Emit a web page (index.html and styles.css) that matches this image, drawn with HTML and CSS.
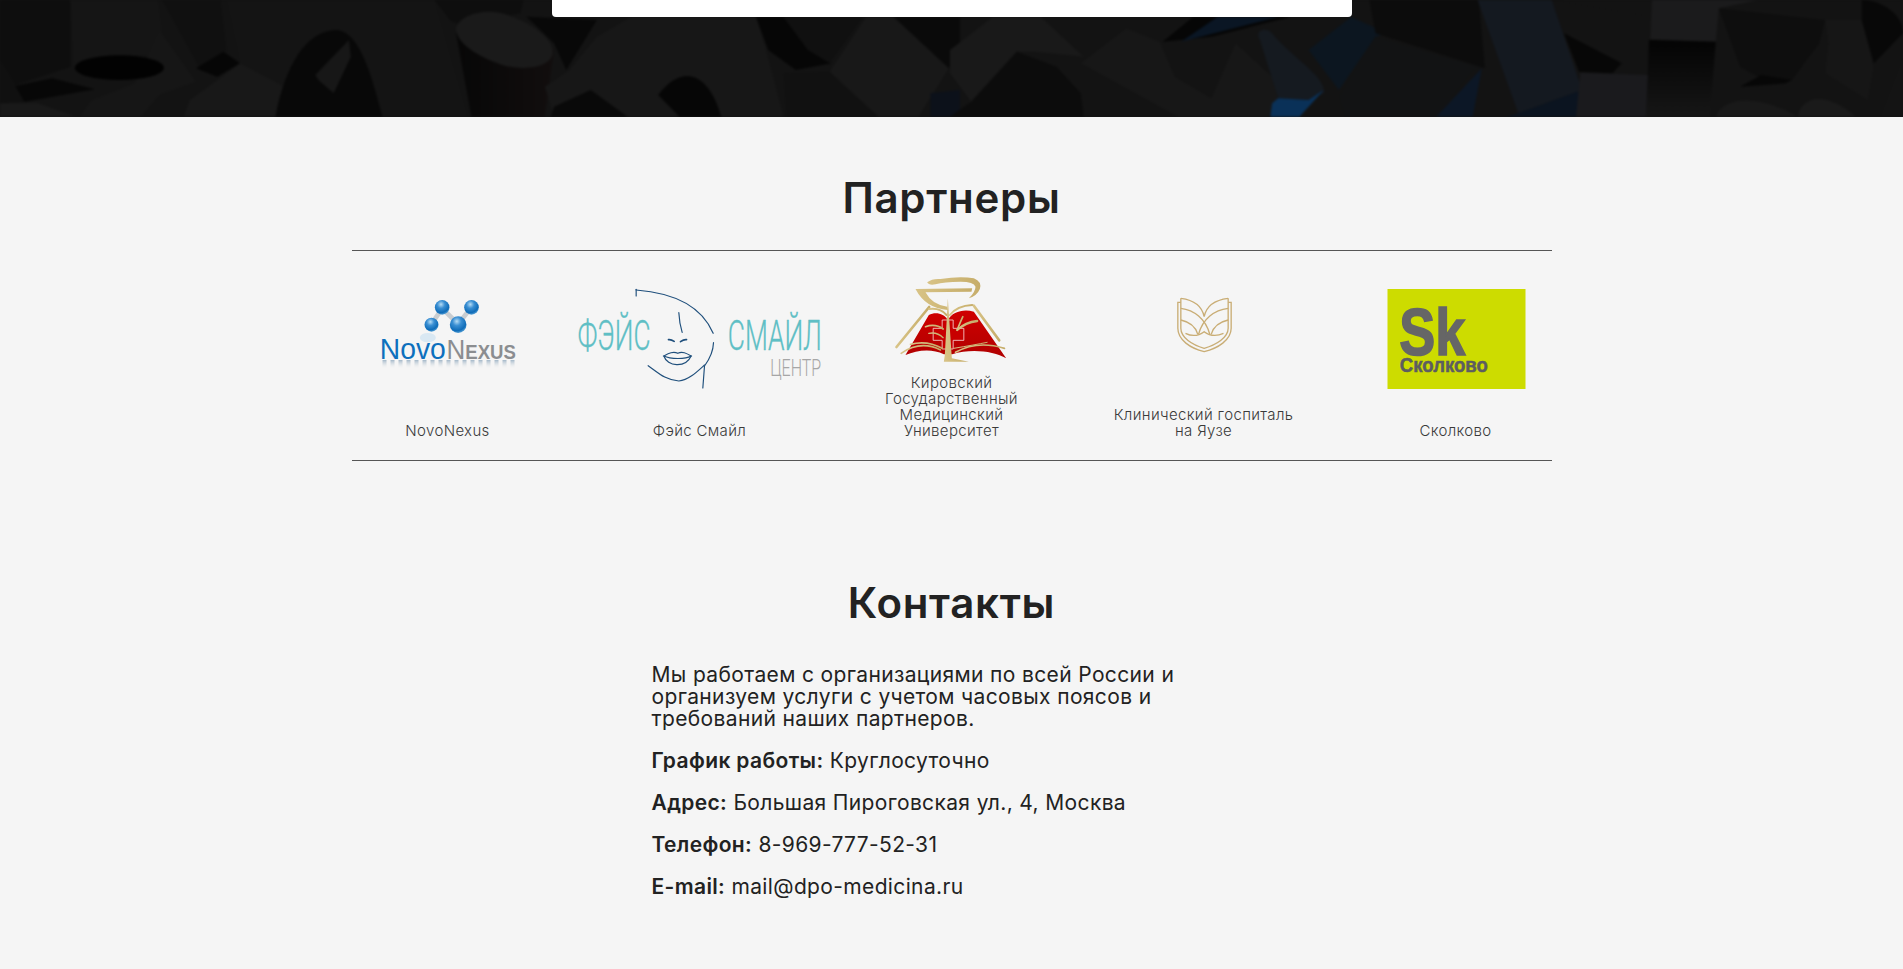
FILE: index.html
```html
<!DOCTYPE html>
<html lang="ru">
<head>
<meta charset="utf-8">
<title>Партнеры и контакты</title>
<link rel="stylesheet" href="styles.css">
</head>
<body>
<header class="hero">
  <svg class="hero-art" viewBox="0 0 1903 117" preserveAspectRatio="none" aria-hidden="true">
    <defs>
      <linearGradient id="fade" x1="0" y1="0" x2="0" y2="1"><stop offset="0" stop-color="#040404"/><stop offset="1" stop-color="#161616"/></linearGradient>
      <linearGradient id="col" x1="0" y1="0" x2="1" y2="0"><stop offset="0" stop-color="#070707"/><stop offset="1" stop-color="#120e0e"/></linearGradient>
    </defs>
    <rect width="1903" height="117" fill="#131313"/>
    <g transform="scale(.6122 .3333)">
      <polygon points="0,0 115,0 115,200 25,255 0,180" fill="#0e0e0e"/>
      <polygon points="115,0 258,0 265,100 270,165 190,165 120,205" fill="#151515"/>
      <polygon points="0,180 25,255 40,305 0,310" fill="#101010"/>
      <polygon points="25,258 85,235 155,268 40,305" fill="#070707"/>
      <polygon points="260,90 320,245 260,285 230,350 130,350 150,300 220,250" fill="#161616"/>
      <ellipse cx="195" cy="203" rx="73" ry="37" fill="#020202"/>
      <polygon points="0,310 60,308 125,350 0,350" fill="#191919"/>
      <polygon points="265,0 360,0 370,150 325,200" fill="#101010"/>
      <polygon points="370,0 710,0 765,350 450,350 392,190" fill="#141414"/>
      <polygon points="392,190 470,265 450,350 300,350 310,300" fill="#181818"/>
      <polygon points="320,205 365,155 392,190 355,230" fill="#060606"/>
      <path d="M450 350C465 200 500 90 550 90C590 95 610 250 625 350Z" fill="#080808"/>
      <polygon points="515,225 570,120 573,170 545,280 520,240" fill="#171717"/>
      <polygon points="710,0 855,0 850,40 745,70 735,60" fill="#0e0e0e"/>
      <polygon points="745,100 905,150 890,350 770,350" fill="url(#col)"/>
      <polygon points="860,50 975,60 925,210 905,130" fill="#080808"/>
      <path d="M745 85C750 45 790 25 820 40C860 60 905 110 903 160C900 200 860 215 820 195C780 170 745 130 745 85Z" fill="#1a1a1a"/>
      <polygon points="1030,51 1235,51 1250,140 1280,350 905,350 890,260 930,210 975,110" fill="#171717"/>
      <polygon points="905,320 965,270 1025,350 900,350" fill="#090909"/>
      <path d="M1075 285C1090 250 1105 228 1125 228C1155 235 1170 300 1178 350L1110 350Z" fill="#060606"/>
      <polygon points="1235,51 1280,51 1320,150 1358,190 1300,210 1255,150" fill="#060606"/>
      <polygon points="1280,51 1410,51 1355,190 1320,150" fill="#101010"/>
      <polygon points="1355,215 1415,51 1460,51 1550,205 1500,350 1430,350" fill="#181818"/>
      <polygon points="1280,220 1355,215 1435,350 1285,350" fill="#111111"/>
      <polygon points="1460,51 1568,51 1568,130 1550,205" fill="#0a0a0a"/>
      <polygon points="1520,280 1568,270 1568,350 1520,350" fill="#0c111a"/>
    </g>
    <g transform="translate(950 0) scale(.6078 .3333)">
      <polygon points="0,150 70,51 150,51 220,170 140,155 110,155 35,305 0,220" fill="#191919"/>
      <polygon points="110,155 175,200 215,280 220,350 0,350 35,305" fill="#0c0c0c"/>
      <polygon points="215,190 290,85 345,125 370,230 430,295 470,130 530,230 540,295 525,350 375,350" fill="#171717"/>
      <polygon points="400,51 560,51 430,110 350,125" fill="#060606"/>
      <polygon points="440,51 540,51 380,125" fill="#0a1624"/>
      <path d="M510 120C500 90 520 80 530 100C560 170 620 230 615 280L590 300L540 295Z" fill="#151a20"/>
      <polygon points="540,295 590,300 615,270 575,350 527,350 530,310" fill="#0a3158"/>
      <polygon points="590,150 660,51 720,100 700,110 640,270" fill="#0c1620"/>
      <polygon points="690,0 870,0 880,205 700,100" fill="#0c0c0c"/>
      <polygon points="640,290 700,110 875,205 860,210 800,350 650,350" fill="#121314"/>
      <polygon points="875,205 800,350 860,350" fill="#0c1726"/>
      <polygon points="990,0 1155,50 1150,120 1130,220 1105,190 1010,100" fill="#131313"/>
      <polygon points="1010,100 1105,190 1090,220 1035,215" fill="#070707"/>
      <polygon points="868,0 990,0 1040,270 935,340" fill="#141920"/>
      <polygon points="1040,270 935,340 915,350 1030,350" fill="#0b1420"/>
      <polygon points="1155,0 1330,0 1265,25 1260,125 1152,118" fill="#1b1b1c"/>
      <polygon points="1150,120 1260,125 1250,350 1145,350" fill="url(#fade)"/>
      <polygon points="1037,218 1148,225 1145,350 1030,350" fill="#1a1a1d"/>
      <polygon points="1265,25 1440,60 1430,130 1385,240 1330,230 1300,200" fill="#0e0e0e"/>
      <polygon points="1300,260 1335,225 1385,240 1375,250" fill="#070707"/>
      <polygon points="1440,60 1500,60 1520,200 1510,300 1440,220 1445,130" fill="#161616"/>
      <path d="M1500 0C1530 0 1568 40 1568 100L1520 190L1500 60Z" fill="#080808"/>
      <path d="M1260 350C1270 290 1330 280 1395 350Z" fill="#191919"/>
      <path d="M1395 350C1400 290 1440 270 1490 350Z" fill="#1a1a1a"/>
      <polygon points="1530,350 1568,170 1568,350" fill="#141414"/>
    </g>
  </svg>
  <div class="hero-card"></div>
</header>

<main class="page">
  <section class="partners">
    <h2 class="title">Партнеры</h2>
    <div class="partner-band">
      <div class="partner-row">
        <figure class="partner">
          <svg class="logo" viewBox="-85.5 0 756 315" aria-label="NovoNexus">
            <defs>
              <radialGradient id="ball" cx=".42" cy=".3" r=".75"><stop offset="0" stop-color="#b5dcf5"/><stop offset=".35" stop-color="#3a8fd3"/><stop offset=".75" stop-color="#0f6cb8"/><stop offset="1" stop-color="#6cb0de"/></radialGradient>
              <linearGradient id="refl" x1="0" y1="0" x2="0" y2="1"><stop offset="0" stop-color="#fff" stop-opacity=".7"/><stop offset="1" stop-color="#000" stop-opacity="0"/></linearGradient>
              <pattern id="stripes" width="24" height="30" patternUnits="userSpaceOnUse"><rect width="12" height="30" fill="#7f9db5"/></pattern>
              <mask id="fadeout"><rect x="88" y="270" width="408" height="26" fill="url(#refl)"/></mask>
            </defs>
            <g stroke="#c9cdd1" stroke-width="14">
              <line x1="275" y1="115" x2="323" y2="162"/>
              <line x1="362" y1="113" x2="323" y2="162"/>
              <line x1="275" y1="115" x2="243" y2="162"/>
            </g>
            <circle cx="275" cy="112" r="22" fill="url(#ball)"/>
            <circle cx="363" cy="112" r="22" fill="url(#ball)"/>
            <circle cx="243" cy="164" r="21" fill="url(#ball)"/>
            <circle cx="323" cy="164" r="25" fill="url(#ball)"/>
            <ellipse cx="232" cy="203" rx="24" ry="14" fill="#d9e8f3"/>
            <text class="nn nn-blue" x="88" y="268" textLength="198" lengthAdjust="spacingAndGlyphs">Novo</text>
            <text class="nn nn-grey" x="288" y="268" textLength="208" lengthAdjust="spacingAndGlyphs"><tspan class="nn-cap">N</tspan>EXUS</text>
            <rect x="88" y="270" width="408" height="26" fill="url(#stripes)" mask="url(#fadeout)"/>
          </svg>
          <figcaption class="caption">NovoNexus</figcaption>
        </figure>

        <figure class="partner">
          <svg class="logo" viewBox="670.5 0 756 315" aria-label="Фэйс Смайл">
            <g fill="none" stroke="#1f4f7c" stroke-width="3.5" stroke-linecap="round">
              <path d="M857 58V78"/>
              <path d="M857 60C960 68 1050 100 1088 190"/>
              <path d="M1089 218C1088 250 1075 270 1062 288L1057 354"/>
              <path d="M893 287C925 310 945 330 985 333C1015 330 1040 305 1062 285"/>
              <path d="M985 128C986 150 990 170 995 187"/>
              <path d="M954 209Q962 208 971 214" stroke-width="5"/>
              <path d="M990 215Q1000 208 1008 209" stroke-width="5"/>
              <path d="M940 258C955 250 968 243 982 250C995 243 1008 250 1022 258C1005 268 960 268 940 258Z"/>
              <path d="M940 258C950 290 1005 295 1022 258"/>
            </g>
            <text class="face" x="682" y="241" textLength="218" lengthAdjust="spacingAndGlyphs">ФЭЙС</text>
            <text class="face" x="1132" y="241" textLength="282" lengthAdjust="spacingAndGlyphs">СМАЙЛ</text>
            <text class="face-sub" x="1259" y="318" textLength="153" lengthAdjust="spacingAndGlyphs">ЦЕНТР</text>
          </svg>
          <figcaption class="caption">Фэйс Смайл</figcaption>
        </figure>

        <figure class="partner">
          <svg class="logo" viewBox="-103.5 15 756 315" aria-label="Кировский Государственный Медицинский Университет">
            <defs>
              <linearGradient id="red" x1="0" y1="0" x2="0" y2="1"><stop offset="0" stop-color="#d00000"/><stop offset="1" stop-color="#b00000"/></linearGradient>
              <linearGradient id="gold" x1="0" y1="0" x2="1" y2="0"><stop offset="0" stop-color="#d8c386"/><stop offset="1" stop-color="#c6ad6a"/></linearGradient>
            </defs>
            <path d="M135 270L205 150C225 140 250 145 262 165C275 140 310 130 340 140L437 280C400 258 330 250 275 268L250 268C215 250 170 255 135 270Z" fill="url(#red)"/>
            <path d="M245 165H278V190H310V226H278V252H245V226H218V190H245Z" fill="#c80000" stroke="#f8d4d4" stroke-width="2.5"/>
            <path d="M165 72L335 70L333 80L195 82Q215 120 260 125L262 135Q195 130 165 72Z" fill="url(#gold)"/>
            <path d="M200 52Q215 40 240 42Q300 32 340 40Q365 50 358 72Q350 92 325 100Q345 80 345 65Q340 50 300 50Q250 50 225 58Q205 62 200 52Z" fill="url(#gold)"/>
            <g fill="none" stroke="url(#gold)" stroke-linecap="round">
              <path d="M108 246L206 126" stroke-width="8"/>
              <path d="M340 122L416 226" stroke-width="8"/>
              <path d="M206 132Q240 128 258 150" stroke-width="6"/>
              <path d="M268 150Q290 122 335 120" stroke-width="6"/>
              <path d="M122 265Q180 225 240 255" stroke-width="5"/>
              <path d="M150 238Q200 225 245 250" stroke-width="5"/>
              <path d="M285 262Q350 225 432 250" stroke-width="5"/>
              <path d="M280 250Q340 240 380 232" stroke-width="3"/>
              <path d="M195 185Q225 175 248 192" stroke-width="5"/>
              <path d="M205 205Q230 200 248 218" stroke-width="4"/>
              <path d="M350 168Q315 172 290 195" stroke-width="7"/>
              <path d="M307 155Q298 175 292 190" stroke-width="5"/>
            </g>
            <path d="M262 100L274 280L325 290H250L253 270Z" fill="url(#gold)"/>
          </svg>
          <figcaption class="caption">Кировский<br>Государственный<br>Медицинский<br>Университет</figcaption>
        </figure>

        <figure class="partner">
          <svg class="logo" viewBox="652.5 15 756 315" aria-label="Клинический госпиталь на Яузе">
            <g fill="none" stroke="#c9ad75" stroke-width="4">
              <path d="M961 112H952V190C952 225 990 250 1031 260C1072 250 1112 225 1112 190V112H1103"/>
              <path d="M961 100V190C961 218 995 240 1031 250C1067 240 1103 218 1103 190V100"/>
              <path d="M961 100C1000 105 1025 125 1031 155C1037 125 1062 105 1103 100"/>
              <path d="M961 130C1000 135 1035 160 1048 208"/>
              <path d="M1103 130C1062 135 1027 160 1014 208"/>
              <path d="M961 165C985 170 1005 185 1012 208"/>
              <path d="M1103 165C1079 170 1059 185 1052 208"/>
              <path d="M975 205C995 215 1015 212 1031 200C1047 212 1067 215 1089 205"/>
            </g>
          </svg>
          <figcaption class="caption">Клинический госпиталь<br>на Яузе</figcaption>
        </figure>

        <figure class="partner">
          <svg class="logo" viewBox="-31.5 0 756 315" aria-label="Сколково">
            <rect x="141" y="57" width="414" height="300" fill="#cddc00"/>
            <text class="sk" x="176" y="255" textLength="198" lengthAdjust="spacingAndGlyphs">Sk</text>
            <text class="sk-name" x="178" y="307" textLength="264" lengthAdjust="spacingAndGlyphs">Сколково</text>
          </svg>
          <figcaption class="caption">Сколково</figcaption>
        </figure>
      </div>
    </div>
  </section>

  <section class="contacts">
    <h2 class="title">Контакты</h2>
    <div class="contact-text">
      <p>Мы работаем с организациями по всей России и организуем услуги с учетом часовых поясов и требований наших партнеров.</p>
      <p><strong>График работы:</strong> Круглосуточно</p>
      <p><strong>Адрес:</strong> Большая Пироговская ул., 4, Москва</p>
      <p><strong>Телефон:</strong> 8-969-777-52-31</p>
      <p><strong>E-mail:</strong> mail@dpo-medicina.ru</p>
    </div>
  </section>
</main>
</body>
</html>
```
FILE: styles.css
```css
* { box-sizing: border-box; }
html, body { margin: 0; padding: 0; }
body {
  background: #f5f5f5;
  color: #222;
  font-family: Inter, "Noto Sans", sans-serif;
  height: 969px;
  overflow: hidden;
}
.hero {
  position: relative;
  height: 117px;
  background: #131313;
  overflow: hidden;
}
.hero-art {
  position: absolute;
  inset: 0;
  width: 100%;
  height: 100%;
  filter: blur(1.1px);
}
.hero-card {
  position: relative;
  width: 800px;
  height: 17px;
  margin: 0 auto;
  background: #fff;
  border-radius: 0 0 4px 4px;
}
.page { display: flex; flex-direction: column; align-items: center; }
.title {
  margin: 0;
  font-size: 42px;
  line-height: 48px;
  font-weight: 600;
  letter-spacing: .7px;
  text-align: center;
  color: #222;
}
.partners { width: 1200px; padding-top: 57px; }
.partner-band {
  margin-top: 28px;
  border-top: 1px solid #555;
  border-bottom: 1px solid #555;
}
.partner-row {
  display: grid;
  grid-template-columns: repeat(5, 252px);
  justify-content: center;
  margin: 0 -30px;
}
.partner {
  display: flex;
  flex-direction: column;
  margin: 0;
  padding: 19px 0 21px;
  min-height: 209px;
}
.logo { display: block; width: 252px; height: 105px; overflow: visible; }
.caption {
  margin-top: auto;
  padding: 0 20px;
  font-size: 15px;
  line-height: 16px;
  font-weight: 300;
  letter-spacing: .35px;
  text-align: center;
  color: #3a3a3a;
}
.nn { font-family: "Liberation Sans", sans-serif; font-weight: 400; }
.nn-blue { font-size: 86px; fill: #0d70bd; }
.nn-grey { font-size: 60px; font-weight: 700; fill: #8b8d90; }
.nn-cap { font-size: 84px; font-weight: 400; }
.face { font-family: Roboto, sans-serif; font-weight: 300; font-size: 128px; fill: #5fbfc5; stroke: #5fbfc5; stroke-width: 1px; }
.face-sub { font-family: Roboto, sans-serif; font-weight: 300; font-size: 70px; fill: #a6a6a6; }
.sk { font-family: "Liberation Sans", sans-serif; font-weight: 700; font-size: 198px; fill: #666; stroke: #666; stroke-width: 5px; }
.sk-name { font-family: "Liberation Sans", sans-serif; font-weight: 700; font-size: 60px; fill: #5d5d60; stroke: #5d5d60; stroke-width: 1.5px; }
.contacts { width: 600px; padding-top: 118px; }
.contact-text { margin-top: 37px; font-size: 21px; line-height: 22px; letter-spacing: .36px; color: #222; }
.contact-text p { margin: 0 0 20px; }
.contact-text p:first-child { max-width: 535px; }
.contact-text strong { font-weight: 600; }
```
